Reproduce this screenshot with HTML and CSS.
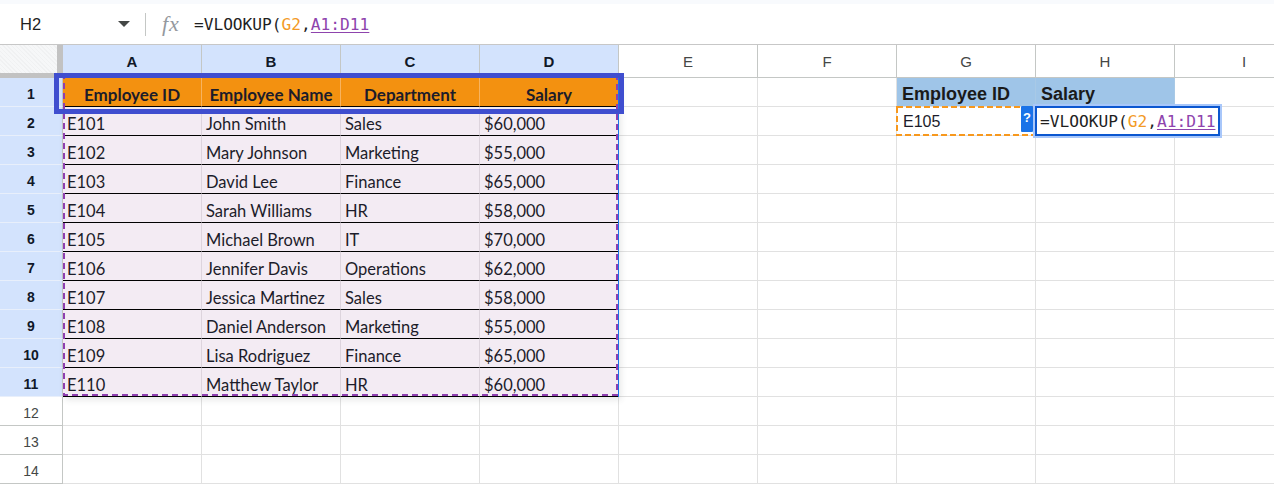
FILE: index.html
```html
<!DOCTYPE html>
<html>
<head>
<meta charset="utf-8">
<link rel="stylesheet" href="styles.css">
</head>
<body>
<div class="fbar">
  <div class="namebox"><span class="ref">H2</span><span class="caret"></span></div>
  <div class="sep"></div>
  <span class="fx">fx</span>
  <div class="ftext">=VLOOKUP(<span class="r-g2">G2</span>,<span class="r-rng">A1:D11</span></div>
</div>
<div class="sheet">
  <div class="corner"></div>
  <div class="ch sel">A</div><div class="ch sel">B</div><div class="ch sel">C</div><div class="ch sel">D</div>
  <div class="ch">E</div><div class="ch">F</div><div class="ch">G</div><div class="ch">H</div><div class="ch">I</div>

  <div class="rh sel">1</div>
  <div class="c hd">Employee ID</div><div class="c hd">Employee Name</div><div class="c hd">Department</div><div class="c hd">Salary</div>
  <div class="c"></div><div class="c"></div><div class="c lk">Employee ID</div><div class="c lk">Salary</div><div class="c"></div>

  <div class="rh sel">2</div>
  <div class="c dt">E101</div><div class="c dt">John Smith</div><div class="c dt">Sales</div><div class="c dt">$60,000</div>
  <div class="c"></div><div class="c"></div><div class="c g2c">E105</div><div class="c"></div><div class="c"></div>

  <div class="rh sel">3</div>
  <div class="c dt">E102</div><div class="c dt">Mary Johnson</div><div class="c dt">Marketing</div><div class="c dt">$55,000</div>
  <div class="c"></div><div class="c"></div><div class="c"></div><div class="c"></div><div class="c"></div>

  <div class="rh sel">4</div>
  <div class="c dt">E103</div><div class="c dt">David Lee</div><div class="c dt">Finance</div><div class="c dt">$65,000</div>
  <div class="c"></div><div class="c"></div><div class="c"></div><div class="c"></div><div class="c"></div>

  <div class="rh sel">5</div>
  <div class="c dt">E104</div><div class="c dt">Sarah Williams</div><div class="c dt">HR</div><div class="c dt">$58,000</div>
  <div class="c"></div><div class="c"></div><div class="c"></div><div class="c"></div><div class="c"></div>

  <div class="rh sel">6</div>
  <div class="c dt">E105</div><div class="c dt">Michael Brown</div><div class="c dt">IT</div><div class="c dt">$70,000</div>
  <div class="c"></div><div class="c"></div><div class="c"></div><div class="c"></div><div class="c"></div>

  <div class="rh sel">7</div>
  <div class="c dt">E106</div><div class="c dt">Jennifer Davis</div><div class="c dt">Operations</div><div class="c dt">$62,000</div>
  <div class="c"></div><div class="c"></div><div class="c"></div><div class="c"></div><div class="c"></div>

  <div class="rh sel">8</div>
  <div class="c dt">E107</div><div class="c dt">Jessica Martinez</div><div class="c dt">Sales</div><div class="c dt">$58,000</div>
  <div class="c"></div><div class="c"></div><div class="c"></div><div class="c"></div><div class="c"></div>

  <div class="rh sel">9</div>
  <div class="c dt">E108</div><div class="c dt">Daniel Anderson</div><div class="c dt">Marketing</div><div class="c dt">$55,000</div>
  <div class="c"></div><div class="c"></div><div class="c"></div><div class="c"></div><div class="c"></div>

  <div class="rh sel">10</div>
  <div class="c dt">E109</div><div class="c dt">Lisa Rodriguez</div><div class="c dt">Finance</div><div class="c dt">$65,000</div>
  <div class="c"></div><div class="c"></div><div class="c"></div><div class="c"></div><div class="c"></div>

  <div class="rh sel">11</div>
  <div class="c dt">E110</div><div class="c dt">Matthew Taylor</div><div class="c dt">HR</div><div class="c dt">$60,000</div>
  <div class="c"></div><div class="c"></div><div class="c"></div><div class="c"></div><div class="c"></div>

  <div class="rh">12</div>
  <div class="c"></div><div class="c"></div><div class="c"></div><div class="c"></div><div class="c"></div><div class="c"></div><div class="c"></div><div class="c"></div><div class="c"></div>
  <div class="rh">13</div>
  <div class="c"></div><div class="c"></div><div class="c"></div><div class="c"></div><div class="c"></div><div class="c"></div><div class="c"></div><div class="c"></div><div class="c"></div>
  <div class="rh">14</div>
  <div class="c"></div><div class="c"></div><div class="c"></div><div class="c"></div><div class="c"></div><div class="c"></div><div class="c"></div><div class="c"></div><div class="c"></div>

  <div class="range-shadow"></div>
  <svg class="range-dash" width="556" height="320" viewBox="0 0 556 320"><rect x="1" y="1" width="553" height="318" fill="none" stroke="#8e3fb0" stroke-width="2" stroke-dasharray="6 4"/></svg>
  <div class="range-edge"></div>
  <div class="head-box"></div>
  <svg class="g2-dash" width="139" height="30" viewBox="0 0 139 30"><rect x="1" y="1" width="137" height="28" fill="none" stroke="#f7981d" stroke-width="2" stroke-dasharray="6 3"/></svg>
  <div class="qbadge">?</div>
  <div class="editor"><div class="editor-in">=VLOOKUP(<span class="r-g2">G2</span>,<span class="r-rng">A1:D11</span></div></div>
</div>
</body>
</html>
```

FILE: styles.css
```css
* { box-sizing: border-box; }

body {
  margin: 0;
  width: 1274px;
  height: 485px;
  overflow: hidden;
  background: #ffffff;
  font-family: "Liberation Sans", Arial, sans-serif;
  color: #1f1f1f;
}

/* formula bar */
.fbar {
  height: 45px;
  border-top: 4px solid #f8fafd;
  border-bottom: 1px solid #c7c7c7;
  display: flex;
  align-items: center;
}

.namebox {
  width: 145px;
  display: flex;
  align-items: center;
  padding-left: 20px;
}

.ref {
  font-size: 16.5px;
  color: #1f1f1f;
}

.caret {
  margin-left: auto;
  margin-right: 15px;
  width: 0;
  height: 0;
  border-left: 6px solid transparent;
  border-right: 6px solid transparent;
  border-top: 6px solid #444746;
}

.sep {
  width: 1px;
  height: 23px;
  background: #c4c7c5;
}

.fx {
  margin-left: 16px;
  font-family: "Liberation Serif", serif;
  font-style: italic;
  font-size: 22px;
  color: #94999e;
  letter-spacing: 1px;
  line-height: 1;
}

.ftext {
  margin-left: 14px;
  font-family: "DejaVu Sans Mono", monospace;
  font-size: 16.2px;
  color: #1f1f1f;
  white-space: nowrap;
}

.r-g2 { color: #f39a26; }
.r-rng { color: #8e44ad; text-decoration: underline; text-underline-offset: 2px; }

/* grid */
.sheet {
  position: relative;
  display: grid;
  grid-template-columns: 63px repeat(9, 139px);
  grid-template-rows: 33px repeat(14, 29px);
}

.corner {
  background-color: #f6f7f8;
  background-image: repeating-linear-gradient(45deg, rgba(0,0,0,0.025) 0 1px, transparent 1px 3px);
  border-right: 6px solid #c2c2c2;
  border-bottom: 5px solid #c2c2c2;
}

.ch {
  display: flex;
  align-items: center;
  justify-content: center;
  font-size: 15px;
  color: #444746;
  border-right: 1px solid #c4c7c5;
  border-bottom: 1px solid #c4c7c5;
}

.ch.sel {
  background: #d3e3fd;
  font-weight: bold;
  color: #101828;
}

.rh {
  display: flex;
  align-items: center;
  justify-content: center;
  padding-top: 4px;
  font-size: 14px;
  color: #444746;
  border-right: 1px solid #c4c7c5;
  border-bottom: 1px solid #c4c7c5;
}

.rh.sel {
  background: #d3e3fd;
  font-weight: bold;
  color: #101828;
  border-bottom-color: #e8effb;
}

.c {
  display: flex;
  align-items: flex-end;
  padding: 0 4px 1px;
  border-right: 1px solid #e1e1e1;
  border-bottom: 1px solid #e1e1e1;
  font-family: Lato, "Open Sans", sans-serif;
  font-size: 16.5px;
  line-height: 20px;
  color: #1c1c2a;
  white-space: nowrap;
  overflow: hidden;
}

.c.hd {
  background: #f39110;
  border-bottom-color: #000000;
  border-right-color: #f7b35f;
  font-weight: bold;
  font-size: 17px;
  justify-content: center;
}

.c.dt {
  background: #f3ebf3;
  border-bottom-color: #000000;
  border-right-color: #ddd4dd;
}

.c.lk {
  background: #9fc5e8;
  border-right-color: #a8c9e6;
  font-family: "Liberation Sans", Arial, sans-serif;
  font-weight: bold;
  font-size: 18px;
  line-height: 22px;
  padding-left: 5px;
  padding-bottom: 1px;
  color: #1a1a1a;
}

.c.g2c {
  font-family: "Liberation Sans", Arial, sans-serif;
  font-size: 16px;
  padding-left: 6px;
  padding-bottom: 3px;
}

/* overlays */
.range-shadow {
  position: absolute;
  left: 63px;
  top: 33px;
  width: 556px;
  height: 319px;
  box-shadow: 2px 3px 6px rgba(60, 64, 67, 0.12);
  pointer-events: none;
}

.range-dash {
  position: absolute;
  left: 63px;
  top: 31px;
}

.range-edge {
  position: absolute;
  left: 618px;
  top: 33px;
  width: 1px;
  height: 319px;
  background: #1a73e8;
}

.head-box {
  position: absolute;
  left: 54px;
  top: 28px;
  width: 570px;
  height: 41px;
  border: 5px solid #3f4ecf;
}

.g2-dash {
  position: absolute;
  left: 896px;
  top: 61px;
}

.qbadge {
  position: absolute;
  left: 1021px;
  top: 61px;
  width: 12px;
  height: 26px;
  background: #1a73e8;
  color: #ffffff;
  font-weight: bold;
  font-size: 13px;
  display: flex;
  justify-content: center;
  padding-top: 4px;
  border-radius: 1px;
}

.editor {
  position: absolute;
  left: 1033px;
  top: 59px;
  width: 189px;
  height: 34px;
  border: 2px solid #a8c7fa;
  background: #ffffff;
}

.editor-in {
  height: 100%;
  border: 2px solid #0b57d0;
  display: flex;
  align-items: center;
  padding-left: 3px;
  font-family: "DejaVu Sans Mono", monospace;
  font-size: 16.2px;
  color: #1f1f1f;
  white-space: nowrap;
  overflow: hidden;
}
```
